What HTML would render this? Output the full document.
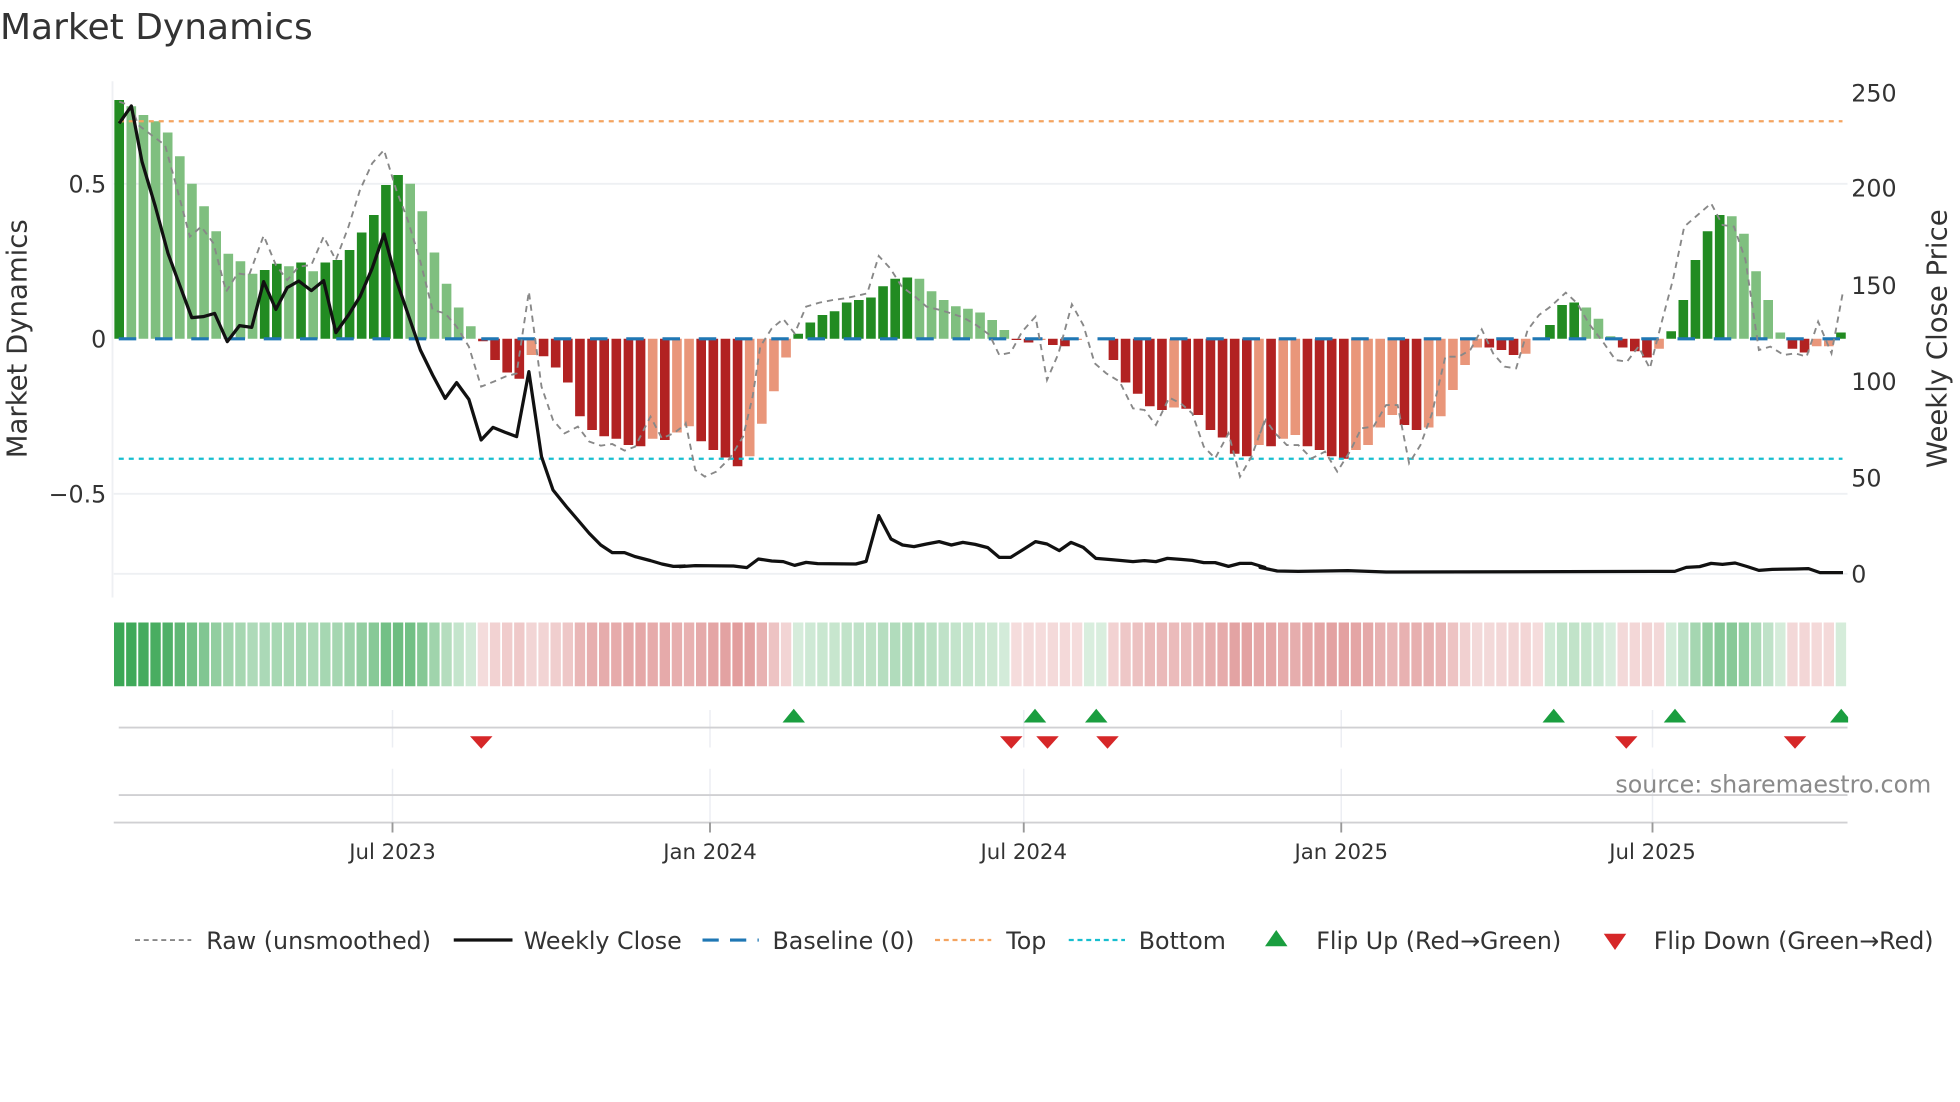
<!DOCTYPE html>
<html><head><meta charset="utf-8">
<style>
html,body{margin:0;padding:0;background:#fff;}
svg{display:block;}
text{font-family:"DejaVu Sans","Liberation Sans",sans-serif;fill:#333;}
</style></head>
<body>
<svg id="s" width="1960" height="1102" viewBox="0 0 1568 881.6" xmlns="http://www.w3.org/2000/svg">
<rect width="1568" height="882" fill="#fff"/>
<text x="0" y="31" font-size="28.8">Market Dynamics</text>
<g stroke="#eef0f3" stroke-width="1.5">
<line x1="91" y1="147" x2="1478" y2="147"/>
<line x1="91" y1="395" x2="1478" y2="395"/>
<line x1="91" y1="459" x2="1478" y2="459"/>
<line x1="90" y1="65" x2="90" y2="478"/>
</g>
<g id="bars"></g>
<line x1="95" y1="271" x2="1478" y2="271" stroke="#1f77b4" stroke-width="2.5" stroke-dasharray="14 15"/>
<line x1="95" y1="97" x2="1474" y2="97" stroke="#f4a460" stroke-width="1.8" stroke-dasharray="4 4"/>
<line x1="95" y1="367" x2="1474" y2="367" stroke="#17becf" stroke-width="1.8" stroke-dasharray="4 4"/>
<polyline id="raw" fill="none" stroke="#888" stroke-width="1.5" stroke-dasharray="5 4"/>
<polyline id="close" fill="none" stroke="#111" stroke-width="2.6" stroke-linejoin="round"/>
<g font-size="19" text-anchor="end">
<text x="85" y="154">0.5</text>
<text x="85" y="278">0</text>
<text x="85" y="402">−0.5</text>
</g>
<g font-size="19">
<text x="1481" y="81">250</text>
<text x="1481" y="157">200</text>
<text x="1481" y="235">150</text>
<text x="1481" y="312">100</text>
<text x="1481" y="389">50</text>
<text x="1481" y="466">0</text>
</g>
<text font-size="22" transform="translate(21,271) rotate(-90)" text-anchor="middle">Market Dynamics</text>
<text font-size="22" transform="translate(1557,271) rotate(-90)" text-anchor="middle">Weekly Close Price</text>
<g id="strip"></g>
<g stroke="#eceef3" stroke-width="1.2">
<line x1="314" y1="568" x2="314" y2="598"/><line x1="314" y1="615" x2="314" y2="657"/>
<line x1="568" y1="568" x2="568" y2="598"/><line x1="568" y1="615" x2="568" y2="657"/>
<line x1="819" y1="568" x2="819" y2="598"/><line x1="819" y1="615" x2="819" y2="657"/>
<line x1="1073" y1="568" x2="1073" y2="598"/><line x1="1073" y1="615" x2="1073" y2="657"/>
<line x1="1322" y1="568" x2="1322" y2="598"/><line x1="1322" y1="615" x2="1322" y2="657"/>
</g>
<g stroke="#d0d0d3" stroke-width="1.5">
<line x1="95" y1="582" x2="1478" y2="582"/>
<line x1="95" y1="636" x2="1478" y2="636"/>
<line x1="91" y1="658" x2="1478" y2="658"/>
</g>
<g stroke="#999" stroke-width="1.5">
<line x1="314" y1="658" x2="314" y2="666"/><line x1="568" y1="658" x2="568" y2="666"/>
<line x1="819" y1="658" x2="819" y2="666"/><line x1="1073" y1="658" x2="1073" y2="666"/>
<line x1="1322" y1="658" x2="1322" y2="666"/>
</g>
<g id="flips"></g>
<text x="1545" y="634" font-size="19" text-anchor="end" style="fill:#8a8a8a">source: sharemaestro.com</text>
<g font-size="17" text-anchor="middle">
<text x="314" y="687">Jul 2023</text>
<text x="568" y="687">Jan 2024</text>
<text x="819" y="687">Jul 2024</text>
<text x="1073" y="687">Jan 2025</text>
<text x="1322" y="687">Jul 2025</text>
</g>
<line x1="108" y1="752" x2="153" y2="752" stroke="#888" stroke-width="1.5" stroke-dasharray="4 3"/>
<line x1="363" y1="752" x2="410" y2="752" stroke="#111" stroke-width="2.6"/>
<line x1="562" y1="752" x2="607" y2="752" stroke="#1f77b4" stroke-width="2.5" stroke-dasharray="13 9"/>
<line x1="748" y1="752" x2="793" y2="752" stroke="#f4a460" stroke-width="1.8" stroke-dasharray="4 3"/>
<line x1="855" y1="752" x2="900" y2="752" stroke="#17becf" stroke-width="1.8" stroke-dasharray="4 3"/>
<polygon points="1012,757 1030,757 1021,744" fill="#1a9e3f"/>
<polygon points="1283,747 1301,747 1292,760" fill="#d62728"/>
<g font-size="19">
<text x="165" y="759">Raw (unsmoothed)</text>
<text x="419" y="759">Weekly Close</text>
<text x="618" y="759">Baseline (0)</text>
<text x="805" y="759">Top</text>
<text x="911" y="759">Bottom</text>
<text x="1053" y="759">Flip Up (Red→Green)</text>
<text x="1323" y="759">Flip Down (Green→Red)</text>
</g>
</svg>
<script>
var NS="http://www.w3.org/2000/svg";
function el(p,t,a){var e=document.createElementNS(NS,t);for(var k in a)e.setAttribute(k,a[k]);p.appendChild(e);return e;}
var D="191D,186L,179L,174L,165L,146L,124L,106L,86L,68L,62L,52L,55D,60D,58L,61D,54L,61D,63D,71D,85D,99D,123D,131D,124L,102L,69L,44L,25L,10L,-2D,-17D,-27D,-32D,-13L,-14D,-23D,-35D,-62D,-73D,-78D,-80D,-85D,-86D,-80L,-81D,-75L,-70L,-82D,-89D,-95D,-102D,-94L,-68L,-42L,-15L,4D,13D,19D,22D,29D,31D,33D,42D,48D,49D,48L,38L,31L,26L,24L,21L,15L,7L,-1D,-3D,-1L,-5D,-6D,-1L,0L,0L,-17D,-35D,-44D,-54D,-57D,-55L,-56D,-61D,-73D,-79D,-92D,-94D,-85L,-86D,-80L,-77L,-86D,-89D,-94D,-96D,-89L,-85L,-71L,-61L,-69D,-73D,-71L,-62L,-41L,-21L,-7L,-7D,-9D,-13D,-12L,-1L,11D,27D,29D,25L,16L,2L,-7D,-10D,-15D,-8L,6D,31D,63D,86D,99D,98L,84L,54L,31L,5L,-8D,-11D,-6L,-6L,5D".split(",");
var bars=document.getElementById("bars"),strip=document.getElementById("strip");
for(var i=0;i<D.length;i++){
 var s=D[i],h=parseFloat(s),dk=s.slice(-1)=="D";
 var x=91.5+9.7*i,w=7.7;
 var c=h>=0?(dk?"#228b22":"#7fbf7f"):(dk?"#b22222":"#e9967a");
 if(h!=0) el(bars,"rect",{x:x,y:h>=0?271-h:271,width:w,height:Math.abs(h),fill:c});
 var a=h>=0?0.18+0.75*Math.min(1,Math.abs(h)/191):0.17+0.6*Math.min(1,Math.abs(h)/191);
 var sc=h>=0?"rgba(44,160,72,"+a+")":"rgba(195,55,55,"+a+")";
 el(strip,"rect",{x:x-0.3,y:498,width:8.3,height:51,fill:sc});
}
function conv(arr,ox){var o=[];for(var i=0;i<arr.length;i+=2){o.push((ox+arr[i]/3.27).toFixed(1)+","+(64+arr[i+1]/3.75).toFixed(1));}return o;}
var c3=[50,130,82,78,110,245,145,380,178,520,210,620,240,713,270,710,300,700,333,785,365,737,397,742,428,605,460,688,490,623,520,603,553,632,585,602,617,758,650,705,680,650,712,565,743,462,775,600,805,700,838,810,870,885,903,955,933,908,965,958,997,1080,1028,1042,1060,1057,1090,1070,1122,875,1155,1130,1185,1230,1220,1280,1250,1320,1280,1360,1310,1395,1340,1418,1372,1418,1400,1430,1440,1442,1470,1452,1500,1459,1530,1458];
var c4=[0,1460,40,1457,140,1458,175,1463,205,1437,240,1443,270,1445,300,1456,330,1447,360,1451,460,1452,487,1444,520,1307,552,1377,582,1395,612,1400,645,1392,678,1385,710,1395,740,1387,772,1393,805,1403,835,1432,865,1432,900,1407,930,1385,960,1392,992,1412,1023,1387,1055,1402,1088,1435,1120,1438,1150,1441,1185,1445,1215,1442,1245,1445,1275,1435,1310,1438,1340,1441,1370,1448,1400,1448,1435,1459,1465,1450,1495,1450,1530,1462];
var c5=[0,1462,45,1473,100,1474,230,1472,330,1476,1085,1474,1115,1462,1150,1460,1180,1450,1210,1453,1243,1449,1275,1460,1305,1471,1340,1468,1400,1467,1435,1466,1465,1478,1525,1478];
document.getElementById("close").setAttribute("points",conv(c3,80).concat(conv(c4,544),conv(c5,1008)).join(" "));
var r3=[50,65,82,78,100,135,140,170,170,195,200,320,235,470,265,440,297,490,330,635,360,580,390,585,428,467,460,555,490,600,520,560,553,555,585,470,617,540,650,440,680,330,712,250,743,210,775,330,805,420,838,545,870,690,903,700,933,740,965,800,997,920,1030,905,1060,890,1090,880,1122,635,1155,920,1185,1020,1215,1060,1250,1040,1280,1085,1310,1097,1340,1092,1372,1112,1400,1100,1440,1010,1470,1075,1500,1060,1530,1035];
var r4=[15,1030,40,1170,65,1190,95,1175,130,1135,165,1070,190,950,210,800,240,745,270,717,300,760,330,680,365,668,400,660,430,655,460,648,490,640,520,528,550,565,580,620,615,650,645,680,680,690,710,700,740,712,775,735,810,765,835,825,865,818,895,755,930,710,960,900,990,820,1025,673,1055,735,1085,850,1115,880,1150,905,1185,985,1215,990,1245,1035,1280,953,1310,970,1340,1000,1370,1100,1400,1135,1435,1060,1465,1190,1495,1130,1530,1020];
var r5=[0,1060,15,1020,40,1060,70,1095,100,1095,135,1135,170,1115,202,1175,235,1115,265,1045,297,1040,330,975,360,975,390,1150,420,1095,450,1000,485,830,520,830,550,810,580,748,610,820,640,860,670,865,700,750,730,705,760,680,800,638,830,670,860,730,900,790,930,840,960,845,990,800,1020,865,1050,730,1080,600,1110,440,1140,410,1180,370,1210,435,1240,440,1270,540,1305,810,1335,800,1370,825,1400,820,1430,830,1460,725,1495,820,1525,635];
document.getElementById("raw").setAttribute("points",conv(r3,80).concat(conv(r4,544),conv(r5,1008)).join(" "));
var f=document.getElementById("flips");
[635,828,877,1243,1340,1473].forEach(function(x){el(f,"polygon",{points:(x-9)+",578 "+(x+9)+",578 "+x+",567",fill:"#1a9e3f"});});
[385,809,838,886,1301,1436].forEach(function(x){el(f,"polygon",{points:(x-9)+",589 "+(x+9)+",589 "+x+",599",fill:"#d62728"});});
el(f,"rect",{x:1478.5,y:560,width:12,height:22,fill:"#fff"});
</script>
</body></html>
